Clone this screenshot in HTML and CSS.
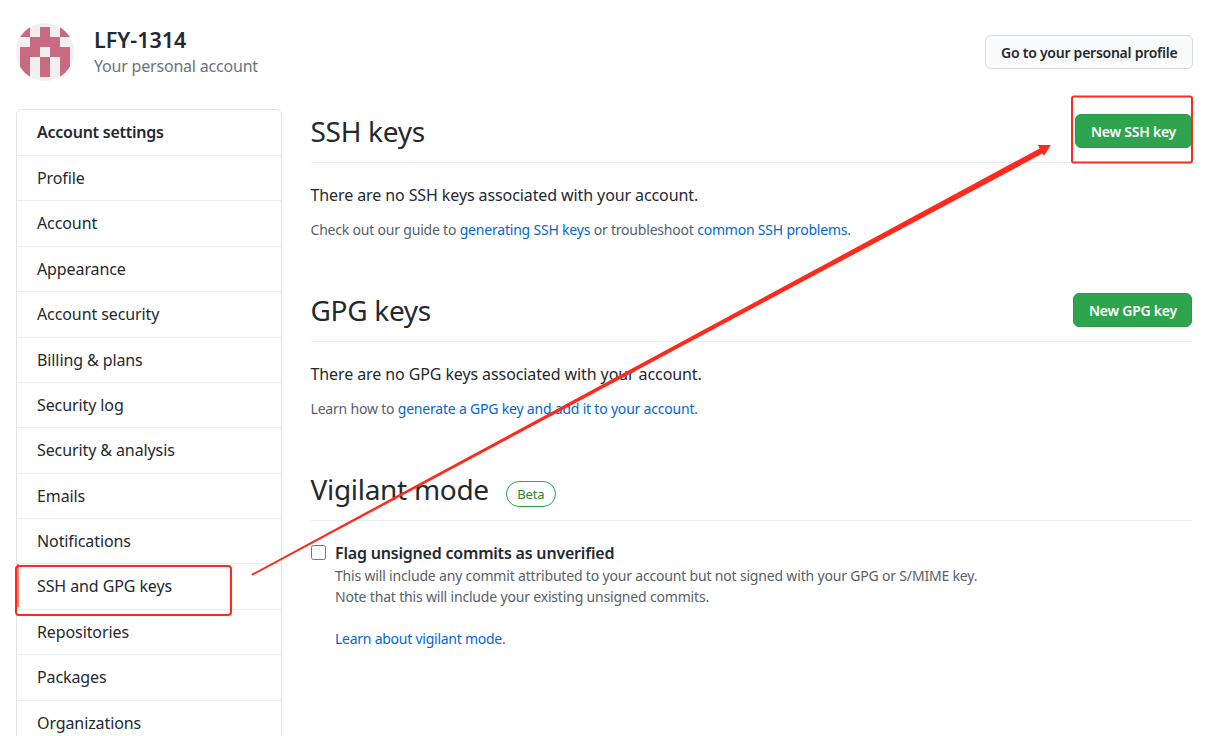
FILE: index.html
```html
<!DOCTYPE html>
<html lang="en">
<head>
<meta charset="utf-8">
<title>SSH and GPG keys</title>
<link rel="stylesheet" href="styles.css">
</head>
<body>
<div class="page">
  <header class="top">
    <div class="who">
      <svg class="avatar" viewBox="0 0 58 58" aria-hidden="true">
        <defs><clipPath id="c"><circle cx="29" cy="29" r="29"/></clipPath></defs>
        <circle cx="29" cy="29" r="29" fill="#f0f0f0"/>
        <g clip-path="url(#c)" fill="#c96b80">
          <rect x="4" y="4" width="10" height="10"/>
          <rect x="24" y="4" width="10" height="10"/>
          <rect x="44" y="4" width="10" height="10"/>
          <rect x="14" y="14" width="30" height="10"/>
          <rect x="4" y="24" width="20" height="10"/>
          <rect x="34" y="24" width="20" height="10"/>
          <rect x="4" y="34" width="10" height="20"/>
          <rect x="24" y="34" width="10" height="20"/>
          <rect x="44" y="34" width="10" height="20"/>
        </g>
      </svg>
      <div class="who-text">
        <div class="name">LFY-1314</div>
        <div class="sub">Your personal account</div>
      </div>
    </div>
    <a class="btn btn-plain">Go to your personal profile</a>
  </header>
  <div class="body">
    <nav class="side">
      <div class="side-head">Account settings</div>
      <a class="side-item">Profile</a>
      <a class="side-item">Account</a>
      <a class="side-item">Appearance</a>
      <a class="side-item">Account security</a>
      <a class="side-item">Billing &amp; plans</a>
      <a class="side-item">Security log</a>
      <a class="side-item">Security &amp; analysis</a>
      <a class="side-item">Emails</a>
      <a class="side-item">Notifications</a>
      <a class="side-item selected">SSH and GPG keys</a>
      <a class="side-item">Repositories</a>
      <a class="side-item">Packages</a>
      <a class="side-item">Organizations</a>
    </nav>
    <main class="main">
      <section class="sec sec-ssh">
        <div class="sec-head">
          <h2 class="title">SSH keys</h2>
          <a class="btn btn-green btn-ssh">New SSH key</a>
        </div>
        <p class="lead">There are no SSH keys associated with your account.</p>
        <p class="note">Check out our guide to <a class="lnk">generating SSH keys</a> or troubleshoot <a class="lnk">common SSH problems</a>.</p>
      </section>
      <section class="sec sec-gpg">
        <div class="sec-head">
          <h2 class="title">GPG keys</h2>
          <a class="btn btn-green">New GPG key</a>
        </div>
        <p class="lead">There are no GPG keys associated with your account.</p>
        <p class="note">Learn how to <a class="lnk">generate a GPG key and add it to your account</a>.</p>
      </section>
      <section class="sec sec-vig">
        <div class="sec-head sec-head-vig">
          <h2 class="title">Vigilant mode</h2>
          <span class="beta">Beta</span>
        </div>
        <div class="check">
          <input class="box" type="checkbox">
          <div class="check-body">
            <div class="check-title">Flag unsigned commits as unverified</div>
            <p class="check-note">This will include any commit attributed to your account but not signed with your GPG or S/MIME key.<br>Note that this will include your existing unsigned commits.</p>
            <p class="check-link"><a class="lnk">Learn about vigilant mode</a>.</p>
          </div>
        </div>
      </section>
    </main>
  </div>
</div>
<svg class="marks" viewBox="0 0 1207 736" aria-hidden="true">
  <rect x="1072" y="96.500" width="120" height="66" rx="2" fill="none" stroke="#ff2a1c" stroke-width="2"/>
  <rect x="16" y="566" width="215" height="49" rx="3" fill="none" stroke="#ff2a1c" stroke-width="2"/>
  <polygon fill="#ff2a1c" points="251.500,574 1039.600,148.400 1038,145 1050.800,145 1044,155.800 1042.400,153.600 252.500,575.500"/>
</svg>
</body>
</html>
```

FILE: styles.css
```css
* { box-sizing: border-box; }
html, body { margin: 0; height: 736px; overflow: hidden; background: #fff; }
body {
  position: relative;
  font-family: "Noto Sans", "Open Sans", sans-serif;
  color: #24292e;
}
.page { padding: 23px 15px 0 16px; }
.top { display: flex; justify-content: space-between; align-items: flex-start; height: 58px; }
.who { display: flex; align-items: center; gap: 20px; }
.avatar { width: 58px; height: 58px; display: block; }
.name { font-size: 21.500px; font-weight: 600; line-height: 26px; margin-top: 1px; }
.sub { font-size: 16px; line-height: 26px; color: #6a737d; letter-spacing: -0.2px; }
.btn {
  display: block;
  height: 34px;
  border-radius: 6px;
  font-size: 14px;
  font-weight: 600;
  line-height: 34px;
  white-space: nowrap;
  border: 1px solid;
  letter-spacing: -0.25px;
}
.btn-plain { width: 208px; margin-top: 12px; margin-right: -1px; padding: 0 15px; background: #fafbfc; border-color: #d9dbde; color: #24292e; }
.btn-green { width: 119px; padding: 0 15px; background: #2ea44f; border-color: #2a9a49; color: #fff; text-align: center; }
.btn-ssh { width: 117px; }
.body { display: flex; margin-top: 28px; gap: 28.500px; }
.side {
  width: 266px;
  flex: none;
  border: 1px solid #e1e4e8;
  border-radius: 6px;
  font-size: 16px;
  letter-spacing: -0.1px;
}
.side-head, .side-item {
  display: block;
  height: 45.380px;
  padding: 0 20px;
  line-height: 45px;
  border-bottom: 1px solid #eaecef;
}
.side-head { font-weight: 600; height: 46px; letter-spacing: -0.25px; }
.side-item.selected { position: relative; }
.side-item.selected::before {
  content: "";
  position: absolute;
  left: 0; top: 0; bottom: 2px;
  width: 2px;
  background: #f9826c;
}
.main { flex: 1; min-width: 0; }
.sec-head {
  display: flex;
  justify-content: space-between;
  align-items: flex-end;
  border-bottom: 1px solid #eaecef;
  height: 54px;
  padding-bottom: 14px;
}
.title { margin: 0 0 -1px; font-size: 28px; font-weight: 400; line-height: 36px; letter-spacing: -0.3px; }
.lead { margin: 21px 0 0; font-size: 16px; line-height: 22px; letter-spacing: -0.1px; }
.note { margin: 14px 0 0; font-size: 14px; line-height: 20px; color: #586069; letter-spacing: -0.2px; }
.lnk { color: #0366d6; }
.sec-gpg { margin-top: 48px; }
.sec-vig { margin-top: 48px; }
.sec-head-vig { justify-content: flex-start; gap: 17px; }
.beta {
  display: block;
  width: 50px;
  height: 26px;
  margin-bottom: -1px;
  border: 1px solid #28a745;
  border-radius: 13px;
  font-size: 13px;
  line-height: 24px;
  text-align: center;
  color: #22863a;
  letter-spacing: -0.1px;
}
.check { display: flex; gap: 9.500px; margin-top: 21px; }
.box { width: 15px; height: 15px; margin: 3px 0 0; flex: none; }
.check-title { font-size: 16px; font-weight: 600; line-height: 22px; letter-spacing: -0.2px; }
.check-note { margin: 1px 0 0; font-size: 14px; line-height: 21px; color: #586069; letter-spacing: -0.18px; }
.check-link { margin: 21px 0 0; font-size: 14px; line-height: 21px; color: #586069; letter-spacing: -0.25px; }
.marks { position: absolute; left: 0; top: 0; width: 1207px; height: 736px; pointer-events: none; }
```
